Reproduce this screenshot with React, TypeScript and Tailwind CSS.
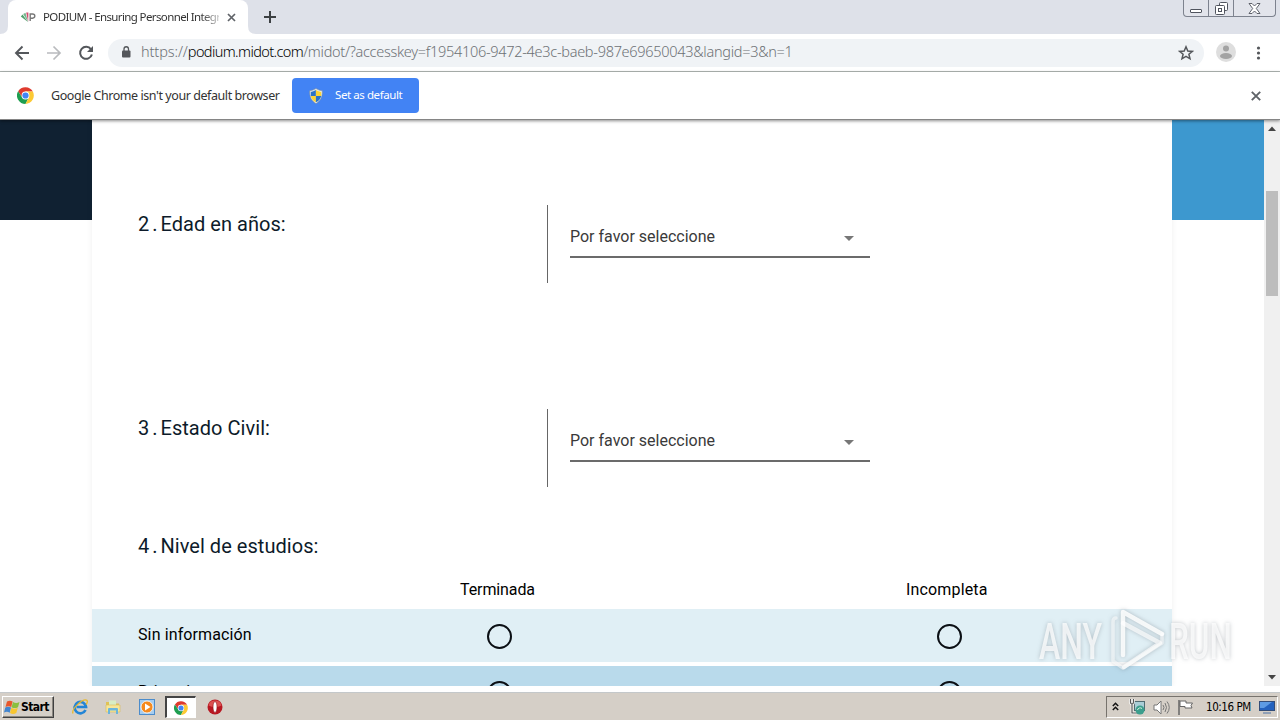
import type { ReactNode } from 'react'

const questions = [
  { number: '2', label: 'Edad en años:' },
  { number: '3', label: 'Estado Civil:' },
]

const levels = [
  { label: 'Sin información', row: 'bg-[#e0eff5] mb-1' },
  { label: 'Primaria', row: 'bg-[#b9daeb]' },
]

function ChromeLogo({ className }: { className: string }) {
  return (
    <svg className={className} viewBox="0 0 48 48">
      <path fill="#df3a2e" d="M24 24 14.5 29.5 3.2 12A24 24 0 0 1 44.8 13H24Z" />
      <path fill="#1e9e50" d="M24 24 33.5 29.5 24 48A24 24 0 0 1 3.2 12L14.5 29.5Z" />
      <path fill="#fcc934" d="M24 24V13H44.8A24 24 0 0 1 24 48L33.5 29.5Z" />
      <circle cx="24" cy="24" r="11" fill="#fff" />
      <circle cx="24" cy="24" r="8.8" fill="#4285f4" />
    </svg>
  )
}

function Shield() {
  return (
    <svg className="h-4 w-4 shrink-0" viewBox="0 0 16 16">
      <path d="M8 .5Q11 2.500 14.300 2.800C14.600 9 12.500 13 8 15.600 3.500 13 1.400 9 1.700 2.800Q5 2.500 8 .5Z" fill="#e4ebf0" stroke="#7b8c9b" strokeWidth=".6" />
      <path d="M7.900 2V7.900H2.800V3.900Q5.500 3.500 7.900 2Z" fill="#2a72c8" />
      <path d="M7.900 2V7.900H13.200V3.900Q10.500 3.500 7.900 2Z" fill="#fbd335" />
      <path d="M7.900 7.900V14.300Q3.700 12 2.800 7.900Z" fill="#fbd335" />
      <path d="M7.900 7.900V14.300Q12.300 12 13.200 7.900Z" fill="#2a72c8" />
    </svg>
  )
}

function TabStrip() {
  return (
    <div className="flex h-[34px] items-start justify-between bg-[#dee1e9]">
      <div className="flex h-full">
        <svg className="h-[34px] w-2" viewBox="0 0 8 34">
          <path d="M0 34Q8 34 8 26V34Z" fill="#fff" />
        </svg>
        <div className="flex h-full w-[240px] items-center rounded-t-lg bg-white pl-3">
          <svg className="h-4 w-4 shrink-0" viewBox="0 0 16 16">
            <path d="M8 13 .8 7.500 2.500 5.500Z" fill="#4fa06c" />
            <path d="M8 13 3.200 5 5.500 3.700Z" fill="#77b58f" />
            <path d="M8.200 13 6.200 3.600 8.400 3.500Z" fill="#d34a6e" />
            <path d="M10.200 12V5H12.500Q14.800 5 14.800 7T12.500 9.200H10.200" fill="none" stroke="#777" strokeWidth="1.400" />
          </svg>
          <span className="ml-[7px] w-[176px] whitespace-nowrap text-[11.5px] leading-4 tracking-[-0.62px] text-[#333] [mask-image:linear-gradient(to_right,#000_158px,transparent_182px)]">
            PODIUM - Ensuring Personnel Integr
          </span>
          <svg className="ml-2 h-[9px] w-[9px] shrink-0" viewBox="0 0 9 9">
            <path d="M1 1 8 8M8 1 1 8" stroke="#5f6368" strokeWidth="1.700" />
          </svg>
        </div>
        <svg className="h-[34px] w-2" viewBox="0 0 8 34">
          <path d="M8 34Q0 34 0 26V34Z" fill="#fff" />
        </svg>
        <svg className="mt-[11px] ml-2 h-3 w-3" viewBox="0 0 12 12">
          <path d="M6 0V12M0 6H12" stroke="#3c4043" strokeWidth="2" />
        </svg>
      </div>
      <div className="mr-1 flex h-[17px] w-[93px] rounded-b-[4px] border border-t-0 border-[#7d828e] bg-[#e2e4eb]">
        <div className="flex w-[25px] items-end justify-center border-r border-[#7d828e] pb-[3px]">
          <div className="h-[4px] w-[12px] rounded-[1px] border border-[#50545e] bg-white" />
        </div>
        <div className="flex w-[25px] items-center justify-center border-r border-[#7d828e]">
          <svg className="h-[13px] w-[13px]" viewBox="0 0 13 13" fill="none" stroke="#50545e">
            <rect x="4.500" y=".5" width="8" height="8" rx="1" fill="#fff" />
            <rect x=".5" y="3.500" width="9" height="9" rx="1" fill="#fff" />
            <rect x="3.500" y="6.500" width="3" height="3" />
          </svg>
        </div>
        <div className="flex flex-1 items-center justify-center">
          <svg className="h-[11px] w-[13px]" viewBox="0 0 13 11">
            <path d="M1 .5H4L6.500 3 9 .5H12L8.300 5.500 12 10.500H9L6.500 8 4 10.500H1L4.700 5.500Z" fill="#fff" stroke="#50545e" strokeWidth=".9" />
          </svg>
        </div>
      </div>
    </div>
  )
}

function Toolbar() {
  return (
    <div className="flex h-[38px] items-center border-b border-[#b2b8b5] bg-white pl-[14px]">
      <svg className="h-4 w-4 shrink-0" viewBox="0 0 16 16" fill="none" stroke="#54575b" strokeWidth="1.900">
        <path d="M15 8H2M8.500 1.500 2 8 8.500 14.500" />
      </svg>
      <svg className="ml-4 h-4 w-4 shrink-0" viewBox="0 0 16 16" fill="none" stroke="#b9bbbe" strokeWidth="1.700">
        <path d="M1 8H14M7.500 1.500 14 8 7.500 14.500" />
      </svg>
      <svg className="ml-4 h-4 w-4 shrink-0" viewBox="0 0 16 16">
        <path d="M13 4.300A6 6 0 1 0 13.900 9.500" fill="none" stroke="#54575b" strokeWidth="2" />
        <path d="M15 1V7H9Z" fill="#54575b" />
      </svg>
      <div className="ml-[14px] flex h-7 w-[1096px] items-center rounded-full bg-[#f0f3f6] pl-[13px]">
        <svg className="mb-px h-3 w-[10px] shrink-0" viewBox="0 0 10 12">
          <rect x="1" y="4.500" width="8.500" height="7" rx="1" fill="#54575b" />
          <path d="M3 5V3A2.250 2.250 0 0 1 7.500 3V5" fill="none" stroke="#54575b" strokeWidth="1.300" />
        </svg>
        <span className="mb-[2px] ml-[10px] whitespace-nowrap text-[14.5px] font-light tracking-[-0.29px] text-[#6d7175]">
          <span className="tracking-[-0.1px]">https://</span>
          <span className="tracking-[-0.6px] text-black">podium.midot.com</span>
          /midot/?accesskey=f1954106-9472-4e3c-baeb-987e69650043&amp;langid=3&amp;n=1
        </span>
        <svg className="mr-[10px] ml-auto h-4 w-4 shrink-0" viewBox="0 0 16 16">
          <path d="M8 1.800 9.800 6 14.300 6.400 10.900 9.300 12 13.800 8 11.400 4 13.800 5.100 9.300 1.700 6.400 6.200 6Z" fill="none" stroke="#54575b" strokeWidth="1.500" />
        </svg>
      </div>
      <svg className="mb-[2px] ml-3 h-5 w-5 shrink-0" viewBox="0 0 20 20">
        <circle cx="10" cy="10" r="10" fill="#dedede" />
        <circle cx="10" cy="6.500" r="3" fill="#a3a3a3" />
        <ellipse cx="10" cy="14" rx="6" ry="3" fill="#a3a3a3" />
      </svg>
      <svg className="ml-4 h-4 w-4 shrink-0" viewBox="0 0 16 16" fill="#54575b">
        <circle cx="6.500" cy="3" r="1.600" />
        <circle cx="6.500" cy="8" r="1.600" />
        <circle cx="6.500" cy="13" r="1.600" />
      </svg>
    </div>
  )
}

function InfoBar() {
  return (
    <div className="relative z-10 flex h-12 items-center border-b border-[#858585] bg-white pl-[17px] shadow-[0_1px_3px_rgba(0,0,0,0.45)]">
      <ChromeLogo className="h-[17px] w-[17px]" />
      <span className="ml-[17px] w-[229px] whitespace-nowrap text-[12.5px] leading-5 tracking-[-0.43px] text-[#333]">Google Chrome isn't your default browser</span>
      <div className="ml-3 flex h-[35px] w-[127px] items-center rounded-[4px] bg-[#4283f4] pl-4">
        <Shield />
        <span className="mb-px ml-[11px] whitespace-nowrap text-[11.5px] tracking-[-0.42px] text-white">Set as default</span>
      </div>
      <svg className="mr-[19px] ml-auto h-[10px] w-[10px]" viewBox="0 0 10 10">
        <path d="M.8.8 9.200 9.200M9.200.8.8 9.200" stroke="#5f6368" strokeWidth="1.900" />
      </svg>
    </div>
  )
}

function QuestionTitle({ number, label }: { number: string; label: string }) {
  return (
    <h2 className="w-[455px] pl-[46px] text-[20px] leading-6 tracking-[0.04px] whitespace-nowrap text-[#0d1b2a]">
      <span className="inline-block w-[22.5px]">{number}<span className="ml-[3px]">.</span></span>
      {label}
    </h2>
  )
}

function Question({ number, label }: { number: string; label: string }) {
  return (
    <div className="flex h-[78px]">
      <div className="pt-[7px]">
        <QuestionTitle number={number} label={label} />
      </div>
      <div className="border-l border-[#666] pl-[22px] pt-5">
        <div className="flex h-[33px] w-[300px] items-start justify-between border-b-2 border-[#6b6b6b] pr-4">
          <span className="text-[16px] leading-6 text-[#3a3a3a]">Por favor seleccione</span>
          <svg className="mt-[11px] h-[5px] w-[10px]" viewBox="0 0 10 5">
            <path d="M0 0H10L5 5Z" fill="#777" />
          </svg>
        </div>
      </div>
    </div>
  )
}

function Radio() {
  return <span className="block h-[25px] w-[25px] rounded-full border-2 border-[#0b0f14]" />
}

function Survey() {
  return (
    <div className="flex h-[566px] overflow-hidden bg-white">
      <div className="w-[92px]">
        <div className="h-[100px] bg-[#102132]" />
      </div>
      <main className="w-[1080px] shrink-0 bg-white pt-[85px] font-[Roboto,sans-serif] shadow-[0_0_6px_rgba(0,0,0,0.07)]">
        <div className="flex flex-col gap-[126px]">
          {questions.map((q) => (
            <Question key={q.number} {...q} />
          ))}
        </div>
        <div className="mt-[47px]">
          <QuestionTitle number="4" label="Nivel de estudios:" />
        </div>
        <div className="mt-5 flex h-[31px] text-[16px] leading-6 text-black">
          <span className="w-[446px] pl-[368px] tracking-[-0.1px]">Terminada</span>
          <span className="pl-[368px] tracking-[0.16px]">Incompleta</span>
        </div>
        {levels.map((level) => (
          <div key={level.label} className={`flex h-[53px] ${level.row}`}>
            <span className="w-[395px] pt-[14px] pl-[46px] text-[16px] leading-6 tracking-[0.12px] text-black">{level.label}</span>
            <div className="w-[450px] pt-[15px]"><Radio /></div>
            <div className="pt-[15px]"><Radio /></div>
          </div>
        ))}
      </main>
      <div className="w-[92px]">
        <div className="h-[100px] bg-[#3d98cf]" />
      </div>
      <div className="flex w-4 flex-col items-center justify-between bg-[#f0f0f0] py-[6px]">
        <svg className="h-[5px] w-2" viewBox="0 0 8 5"><path d="M0 5H8L4 .5Z" fill="#444" /></svg>
        <div className="mt-[60px] mb-auto h-[105px] w-3 bg-[#bdbdbd]" />
        <svg className="h-[5px] w-2" viewBox="0 0 8 5"><path d="M0 0H8L4 4.500Z" fill="#444" /></svg>
      </div>
    </div>
  )
}

function TaskIcon({ children, className }: { children: ReactNode; className: string }) {
  return <svg className={`h-4 w-4 shrink-0 ${className}`} viewBox="0 0 16 16">{children}</svg>
}

function Taskbar() {
  return (
    <div className="flex h-[27px] items-center bg-[#d5cfc7] pt-px">
      <div className="ml-[2px] flex h-[22px] w-[52px] items-center border border-t-white border-r-[#404040] border-b-[#404040] border-l-white pl-[1px] shadow-[inset_-1px_-1px_0_#8b8780]">
        <svg className="h-[15px] w-[16px] shrink-0" viewBox="0 0 16 15">
          <path d="M3 1.500Q6 0 8.600 1.500L7.200 7Q4.500 5.500 1.500 7Z" fill="#e8572b" />
          <path d="M9 2Q12 4 15.500 2L14 7.200Q10.500 9 7.600 7.200Z" fill="#8abf3f" />
          <path d="M1.300 7.500Q4 6 7 7.500L5.700 12.700Q3 11 0 12.500Z" fill="#4285cf" />
          <path d="M7.400 7.800Q10.500 9.700 13.800 7.800L12.300 13Q9 15 6 13Z" fill="#f8c630" />
        </svg>
        <span className="ml-px text-[12px] leading-4 font-bold tracking-[-0.6px] text-black [font-family:'DejaVu_Sans_Condensed','DejaVu_Sans',sans-serif]">Start</span>
      </div>
      <TaskIcon className="ml-[18px]">
        <path d="M13.500 11A5.700 5.700 0 1 1 14 8H4.500" fill="none" stroke="#2385d6" strokeWidth="2.700" />
        <path d="M1 14.500C-1 10 11-1 15 1.400 16 2.500 14.500 5 14 5.500" fill="none" stroke="#e8b92d" strokeWidth="1.300" />
      </TaskIcon>
      <TaskIcon className="ml-[17px]">
        <path d="M1 3H6L7.500 4.500H14V12H1Z" fill="#e0c256" />
        <path d="M4 1.500H11V6H4Z" fill="#d8edc4" />
        <path d="M1 6H15V13H1Z" fill="#f7e697" stroke="#d9bd5b" strokeWidth=".6" />
        <path d="M3 15V10Q3 9 4 9H12Q13 9 13 10V15H11V11.500H5V15Z" fill="#6bb5db" />
      </TaskIcon>
      <TaskIcon className="ml-[18px]">
        <rect x=".5" y=".5" width="15" height="15" fill="#a5cdf0" stroke="#4c8ccb" />
        <circle cx="8" cy="8" r="6" fill="#f58a1e" stroke="#fff" strokeWidth=".8" />
        <path d="M6 4.500 11.500 8 6 11.500Z" fill="#fff" />
      </TaskIcon>
      <div className="ml-[10px] flex h-[22px] w-[31px] items-center justify-center border-t-2 border-r border-b border-l-2 border-t-[#444] border-r-white border-b-white border-l-[#444] bg-white">
        <ChromeLogo className="h-[14px] w-[14px]" />
      </div>
      <TaskIcon className="ml-[11px]">
        <circle cx="8" cy="8" r="7.500" fill="#b81822" />
        <path d="M1.500 6.500A6.600 6 0 0 1 14.500 6.500Q8 9.500 1.500 6.500Z" fill="#dc5151" />
        <ellipse cx="8" cy="8" rx="2" ry="5.500" fill="#fff" stroke="#8f1219" strokeWidth=".6" />
      </TaskIcon>
      <div className="mr-[2px] ml-auto flex h-[22px] w-[172px] items-center border border-t-[#77736d] border-r-white border-b-white border-l-[#77736d]">
        <svg className="mb-[2px] ml-[5px] h-[9px] w-[7px]" viewBox="0 0 7 9" fill="none" stroke="#111" strokeWidth="1.500">
          <path d="M.8 4 3.500 1.300 6.200 4M.8 8 3.500 5.300 6.200 8" />
        </svg>
        <TaskIcon className="ml-[10px]">
          <rect x="5.500" y="2.500" width="10" height="9" fill="#a9cdd6" stroke="#506b72" />
          <path d="M1.500 0V3Q1.500 5 3 5T4.500 3V0M3 5V14H8" fill="none" stroke="#fff" strokeWidth="2.600" />
          <path d="M1.500 0V3Q1.500 5 3 5T4.500 3V0M3 5V14H8" fill="none" stroke="#555" strokeWidth="1.200" />
          <circle cx="11" cy="11" r="4.500" fill="#3c9e8d" />
          <path d="M8.500 11A2.800 2.800 0 0 1 13 9.500" fill="none" stroke="#d8f2df" />
        </TaskIcon>
        <svg className="ml-2 h-[15px] w-[17px]" viewBox="0 0 17 15" stroke="#777" fill="none">
          <path d="M1 5H4L8 1V14L4 10H1Z" fill="#fff" />
          <path d="M10 5Q12 7.500 10 10M12 3Q15 7.500 12 12M14 1.500Q18.500 7.500 14 13.500" />
        </svg>
        <svg className="ml-[7px] h-4 w-[17px]" viewBox="0 0 17 16" stroke="#666">
          <path d="M2 1V16" strokeWidth="1.500" />
          <path d="M3 2H9V4H15.500L14 6.500 15 9H8V7.500H3Z" fill="#fff" />
        </svg>
        <span className="ml-[12px] w-[46px] whitespace-nowrap pt-px text-[11.5px] tracking-[-0.45px] text-black [font-family:'DejaVu_Sans_Condensed','DejaVu_Sans',sans-serif]">10:16 PM</span>
        <svg className="ml-[7px] h-[14px] w-[16px] shrink-0" viewBox="0 0 16 14">
          <rect x=".5" y="1.500" width="15" height="9" fill="#2462be" stroke="#334d78" />
          <path d="M1 2H13L5 8H1Z" fill="#5d9be4" />
          <path d="M4 13H12" stroke="#7891b0" strokeWidth="1.500" />
        </svg>
      </div>
    </div>
  )
}

function Watermark() {
  return (
    <div className="absolute top-[607px] left-[1039px] flex h-[66px] w-[200px] items-center font-[Roboto,sans-serif] text-[50px] leading-none font-medium text-white/75 drop-shadow-[0_0_2px_rgba(100,110,120,0.5)]">
      <span className="w-[69px] pt-[3px]"><span className="inline-block origin-left scale-x-[0.64]">ANY</span></span>
      <svg className="h-[64px] w-[57px] shrink-0" viewBox="0 0 57 64" fill="none" stroke="#fff" strokeWidth="4.500" strokeLinejoin="round" strokeLinecap="round">
        <path d="M15 47V4L54 26" strokeOpacity=".85" />
        <path d="M15 15 52 35 16 59" strokeOpacity=".7" />
        <path d="M8 10Q5 10 5 14V53L15 60 54 35V26" strokeOpacity=".55" strokeWidth="3.500" />
      </svg>
      <span className="ml-[4px] w-[70px] pt-[3px]"><span className="inline-block origin-left scale-x-[0.63]">RUN</span></span>
    </div>
  )
}

export default function App() {
  return (
    <div className="relative h-[720px] w-[1280px] overflow-hidden bg-white [font-family:'Noto_Sans',sans-serif]">
      <TabStrip />
      <Toolbar />
      <InfoBar />
      <Survey />
      <div className="h-[7px] border-b border-[#c4c8ca] bg-white" />
      <Taskbar />
      <Watermark />
    </div>
  )
}
